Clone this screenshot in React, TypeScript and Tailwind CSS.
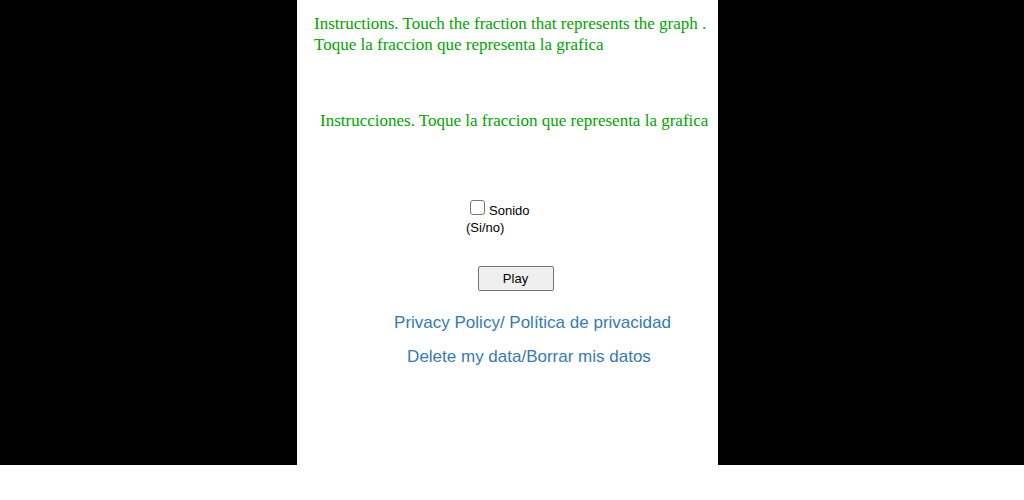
import React from 'react';

const serif = "font-['Liberation_Serif','Times_New_Roman',serif]";
const sans = "font-['Liberation_Sans',Arial,sans-serif]";

export default function App() {
    return (
        <div className="w-[1024px] h-[500px] bg-white">
            <div className="flex h-[465px] bg-black pl-[297px]">
                <div className="w-[421px] bg-white flex flex-col">
                    {/* Instructions */}
                    <p className={`${serif} text-[17px] leading-[21px] text-[#00a400] pl-[17px] pt-[13px]`}>
                        Instructions. Touch the fraction that represents the graph .<br />
                        Toque la fraccion que representa la grafica
                    </p>
                    <p className={`${serif} text-[17px] leading-[21px] text-[#00a400] pl-[23px] mt-[55px]`}>
                        Instrucciones. Toque la fraccion que representa la grafica
                    </p>

                    {/* Sound toggle */}
                    <div className={`${sans} text-[13px] leading-[16px] text-black ml-[169px] mt-[72px] w-[70px]`}>
                        <label className="flex items-start gap-[4px] pl-[4px]">
                            <span className="w-[15px] h-[15px] -mt-[3px] border border-[#767676] rounded-[3px] bg-white" />
                            Sonido
                        </label>
                        <div className="mt-[1px]">(Si/no)</div>
                    </div>

                    {/* Play */}
                    <div className="flex justify-center pl-[16px] mt-[30px]">
                        <button className={`${sans} w-[76px] h-[25px] text-[13px] text-black bg-[#efefef] border border-[#767676] rounded-[2px]`}>
                            Play
                        </button>
                    </div>

                    {/* Links */}
                    <div className={`${sans} flex flex-col items-center pl-[50px] text-[17px] text-[#337ab7] mt-[22px] gap-[14px]`}>
                        <a href="#" className="leading-[20px]">Privacy Policy/ Política de privacidad</a>
                        <a href="#" className="leading-[20px] mr-[7px]">Delete my data/Borrar mis datos</a>
                    </div>
                </div>
            </div>
        </div>
    );
}
